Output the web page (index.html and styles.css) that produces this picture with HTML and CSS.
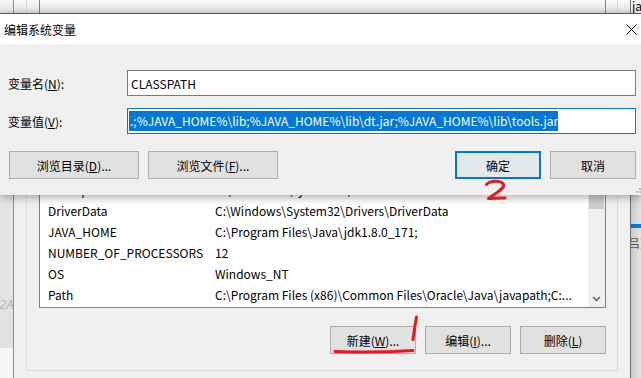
FILE: index.html
```html
<!DOCTYPE html>
<html lang="zh-CN">
<head>
<meta charset="utf-8">
<title>编辑系统变量</title>
<link rel="stylesheet" href="styles.css">
</head>
<body>
<div class="backwin">
  <div class="side-left"><span class="ghost">2A</span></div>
  <div class="main">
    <div class="upper-group"><div class="upper-list"></div></div>
    <div class="group">
      <div class="list">
        <div class="rows">
          <div class="row"></div>
          <div class="row"><span class="name">ComSpec</span><span class="val">C:\WINDOWS\system32\cmd.exe</span></div>
          <div class="row"><span class="name">DriverData</span><span class="val">C:\Windows\System32\Drivers\DriverData</span></div>
          <div class="row"><span class="name">JAVA_HOME</span><span class="val">C:\Program Files\Java\jdk1.8.0_171;</span></div>
          <div class="row"><span class="name">NUMBER_OF_PROCESSORS</span><span class="val">12</span></div>
          <div class="row"><span class="name">OS</span><span class="val">Windows_NT</span></div>
          <div class="row"><span class="name">Path</span><span class="val">C:\Program Files (x86)\Common Files\Oracle\Java\javapath;C:...</span></div>
        </div>
        <div class="vscroll">
          <div class="thumb"></div>
          <div class="arrow">
            <svg width="9" height="6" viewBox="0 0 9 6"><path d="M1 1 L4.5 4.5 L8 1" fill="none" stroke="#606060" stroke-width="1.5"/></svg>
          </div>
        </div>
      </div>
      <div class="actions">
        <button class="btn">新建(<u>W</u>)...</button>
        <button class="btn">编辑(<u>I</u>)...</button>
        <button class="btn">删除(<u>L</u>)</button>
      </div>
    </div>
  </div>
  <div class="side-right">
    <div class="peek-top">ja</div>
    <div class="peek-bar"></div>
    <div class="peek-text">吕)</div>
  </div>
</div>

<div class="dialog">
  <div class="titlebar">
    <span class="title">编辑系统变量</span>
    <svg class="close" width="11" height="11" viewBox="0 0 11 11"><path d="M0.5 0.5 L10.5 10.5 M10.5 0.5 L0.5 10.5" stroke="#000" stroke-width="1"/></svg>
  </div>
  <div class="dbody">
    <div class="field">
      <label class="lbl">变量名(<u>N</u>):</label>
      <div class="input">CLASSPATH</div>
    </div>
    <div class="field field2">
      <label class="lbl">变量值(<u>V</u>):</label>
      <div class="input input-focus"><span class="sel">.;%JAVA_HOME%\lib;%JAVA_HOME%\lib\dt.jar;%JAVA_HOME%\lib\tools.jar</span></div>
    </div>
    <div class="brow">
      <button class="btn wide">浏览目录(<u>D</u>)...</button>
      <button class="btn wide">浏览文件(<u>F</u>)...</button>
      <button class="btn default">确定</button>
      <button class="btn">取消</button>
    </div>
  </div>
  <svg class="grip" width="5" height="5" viewBox="0 0 5 5"><rect x="3" y="0" width="2" height="2" fill="#bcbcbc"/><rect x="0" y="3" width="2" height="2" fill="#bcbcbc"/><rect x="3" y="3" width="2" height="2" fill="#bcbcbc"/></svg>
</div>

<svg class="marks" width="641" height="378" viewBox="0 0 641 378">
  <g fill="none" stroke="#e8171f" stroke-width="3" stroke-linecap="round" stroke-linejoin="round">
    <path d="M486.5 184.5 C490 180.5 501 180 503.5 184.5 C505 188.5 496 193 488.5 198.5 L505 198"/>
    <path d="M335 351.5 Q374 353 413 350.5"/>
    <path d="M416.5 317 Q414.5 328 413 339.5"/>
  </g>
</svg>
</body>
</html>
```

FILE: styles.css
```css
* { box-sizing: border-box; margin: 0; padding: 0; }
html, body { width: 641px; height: 378px; overflow: hidden; }
body {
  font: 12px "Noto Sans CJK SC", "Microsoft YaHei", sans-serif;
  color: #000;
  background: #f0f0f0;
  position: relative;
}
u { text-decoration: underline; text-underline-offset: 1px; }

/* ---------- background window ---------- */
.backwin { display: flex; height: 378px; }

.side-left {
  width: 14px;
  border-right: 1px solid #8c8c8c;
  background:
    linear-gradient(#f8f8f8, #e6e6e6) top / 100% 13px no-repeat,
    linear-gradient(#e9e9e9 0, #e2e2e2 348px, #f6f6f6 348px);
  padding-top: 295px;
  overflow: hidden;
}
.ghost {
  display: block;
  color: #b8b8b8;
  font: italic 13px "Noto Sans", sans-serif;
  margin-left: -1px;
  white-space: nowrap;
}

.main {
  flex: 1;
  background:
    linear-gradient(#fbfbfb, #e5e5e5) top / 100% 13px no-repeat,
    #f0f0f0;
}
.upper-group {
  height: 13px;
  margin: 0 12px;
  border-left: 1px solid #d6d6d6;
  border-right: 1px solid #d6d6d6;
  padding: 0 11px 0 12px;
}
.upper-list {
  height: 13px;
  border-left: 1px solid #828282;
  border-right: 1px solid #828282;
}

.group {
  margin: 126px 12px 0;
  border: 1px solid #dcdcdc;
  padding: 17px 11px 16px 12px;
}
.list {
  display: flex;
  height: 151px;
  border: 1px solid #828282;
  background: #fff;
}
.rows { flex: 1; overflow: hidden; padding-bottom: 2px; }
.row {
  height: 21px;
  display: flex;
  align-items: center;
  padding-left: 8px;
  white-space: nowrap;
}
.name { width: 167px; flex: none; }
.val { flex: none; }

.vscroll {
  width: 17px;
  background: #f0f0f0;
  display: flex;
  flex-direction: column;
  align-items: center;
}
.thumb {
  margin-top: 19px;
  width: 15px;
  height: 32px;
  background: #cdcdcd;
}
.arrow {
  margin-top: auto;
  height: 17px;
  display: flex;
  align-items: center;
  justify-content: center;
}

.actions {
  margin-top: 18px;
  display: flex;
  justify-content: flex-end;
  gap: 9px;
}

.btn {
  height: 28px;
  width: 86px;
  border: 1px solid #adadad;
  background: #e1e1e1;
  font: inherit;
  color: #000;
  padding: 0;
}

.side-right {
  width: 11px;
  border-left: 1px solid #6f6f6f;
  background: linear-gradient(to right, #c9c9c9, #e4e4e4);
  overflow: hidden;
  display: flex;
  flex-direction: column;
}
.peek-top {
  height: 13px;
  background: #f4f4f4;
  line-height: 12px;
  padding-left: 1px;
  white-space: nowrap;
}
.peek-bar {
  margin-top: 211px;
  height: 4px;
  background: #0078d7;
}
.peek-text {
  margin-top: 6px;
  color: #555;
  white-space: nowrap;
  margin-left: -3px;
}

/* ---------- dialog (window on top) ---------- */
.dialog {
  position: absolute;
  top: 13px;
  left: 0;
  width: 641px;
  height: 182px;
  background: #f0f0f0;
  border-top: 1px solid #5a5a5a;
  box-shadow: 0 2px 9px rgba(0, 0, 0, 0.35);
}
.titlebar {
  height: 30px;
  background: #fff;
  display: flex;
  align-items: center;
  justify-content: space-between;
  padding: 0 4px 0 4px;
}
.close { display: block; }

.dbody { padding: 26px 5px 0 8px; }
.field {
  display: flex;
  align-items: center;
  height: 26px;
}
.field2 { margin-top: 12px; }
.lbl { width: 119px; flex: none; }
.input {
  width: 509px;
  flex: none;
  height: 26px;
  border: 1px solid #7a7a7a;
  background: #fff;
  display: flex;
  align-items: center;
  padding-left: 3px;
  white-space: nowrap;
  overflow: hidden;
}
.input-focus {
  border-color: #0078d7;
  padding-left: 1px;
}
.sel {
  background: #0078d7;
  color: #fff;
  height: 20px;
  line-height: 20px;
  padding-left: 1px;
}

.brow {
  margin-top: 17px;
  margin-left: 1px;
  display: flex;
  gap: 9px;
}
.wide { width: 130px; }
.default {
  margin-left: auto;
  border: 2px solid #0078d7;
  background: #e3e8ed;
}
.grip {
  position: absolute;
  right: 0;
  bottom: 2px;
}

/* ---------- hand-drawn annotations ---------- */
.marks {
  position: absolute;
  top: 0;
  left: 0;
  pointer-events: none;
}
```
